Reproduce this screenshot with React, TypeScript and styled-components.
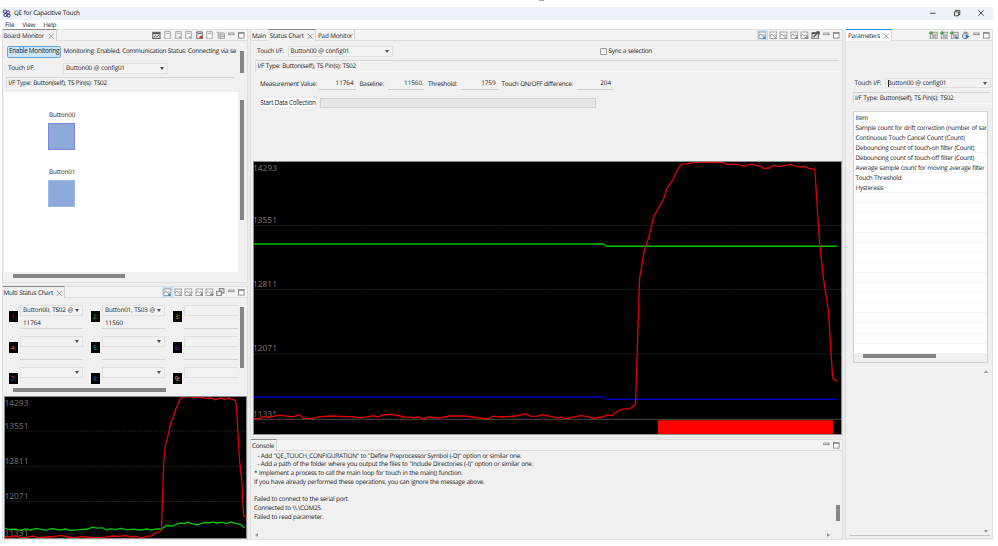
import React from "react";
import styled, { createGlobalStyle, css } from "styled-components";

const Global = createGlobalStyle`
  * { box-sizing: border-box; }
  html, body { margin: 0; background: #fff; }
  body {
    font-family: "Open Sans", "Noto Sans", sans-serif;
    font-size: 6.35px;
    line-height: 8.67px;
    letter-spacing: -0.24px;
    word-spacing: 0.3px;
    color: #1c1c1c;
    text-rendering: geometricPrecision;
    overflow: hidden;
  }
`;

const Page = styled.div`
  width: 998px;
  height: 546px;
  padding: 7px 5px 0 2px;
  background: #fff;
`;
const Win = styled.div`
  display: flex;
  flex-direction: column;
  width: 991px;
  height: 533px;
`;
const Remnant = styled.i`
  position: absolute;
  left: 539px;
  top: 0;
  width: 5px;
  height: 1px;
  background: #a8a8a8;
`;
const TitleBar = styled.header`
  display: flex;
  align-items: center;
  height: 12.5px;
  flex: none;
  background: #edf2f8;
  color: #111;
  gap: 3px;
`;
const TitleText = styled.span`
  flex: 1;
  letter-spacing: -0.24px;
`;
const WinControls = styled.div`
  display: flex;
  gap: 16px;
  padding-right: 8px;
`;
const MenuBar = styled.nav`
  display: flex;
  gap: 8px;
  padding: 0 3px;
  height: 9.5px;
  line-height: 9.5px;
  flex: none;
  background: #fff;
  letter-spacing: -0.2px;
`;
const Body = styled.main`
  display: flex;
  flex: 1;
  min-height: 0;
  gap: 2px;
  background: #ececec;
`;
const Column = styled.section<{ $w: number }>`
  display: flex;
  flex-direction: column;
  width: ${(p) => p.$w}px;
  flex: none;
  min-height: 0;
`;
const Pane = styled.section<{ $h: number; $mt?: number }>`
  display: flex;
  flex-direction: column;
  height: ${(p) => p.$h}px;
  margin-top: ${(p) => p.$mt ?? 0}px;
  flex: none;
  background: #f0f0f0;
  border: 1px solid #dedede;
  border-bottom-color: #e2e2e2;
`;
const TabBar = styled.div`
  display: flex;
  height: 11px;
  flex: none;
  border-bottom: 1px solid #dcdcdc;
  background: #f3f3f3;
`;
const Tab = styled.div<{ $w: number; $active?: "gray" | "blue"; $line?: boolean; $pl?: number }>`
  display: flex;
  justify-content: space-between;
  align-items: center;
  width: ${(p) => p.$w}px;
  height: 11px;
  padding: 1px 2px 0 ${(p) => p.$pl ?? 1}px;
  white-space: nowrap;
  letter-spacing: -0.23px;
  ${(p) =>
    p.$active &&
    css`
      margin-top: -1px;
      height: 12px;
      background: ${p.$active === "blue" ? "#fcfcfc" : "#f0f0f0"};
      border-top: 1px solid ${p.$active === "blue" ? "#2f8fe0" : "#8a8a8a"};
      border-right: 1px solid #d4d4d4;
    `}
  ${(p) => p.$line && "border-right: 1px solid #d4d4d4;"}
`;
const Tools = styled.div`
  display: flex;
  margin-left: auto;
  height: 11px;
`;
const Tool = styled.span<{ $on?: boolean }>`
  display: grid;
  place-items: center;
  width: 10.65px;
  height: 10px;
  background: ${(p) => (p.$on ? "#c6e0f8" : "transparent")};
`;
const Row = styled.div<{ $h: number; $pl?: number; $mt?: number }>`
  display: flex;
  align-items: center;
  height: ${(p) => p.$h}px;
  margin-top: ${(p) => p.$mt ?? 0}px;
  padding-left: ${(p) => p.$pl ?? 0}px;
  flex: none;
  white-space: nowrap;
`;
const Label = styled.span<{ $w?: number }>`
  width: ${(p) => (p.$w ? `${p.$w}px` : "auto")};
  flex: none;
  white-space: pre;
`;
const Combo = styled.div<{ $w: number }>`
  display: flex;
  align-items: center;
  justify-content: space-between;
  width: ${(p) => p.$w}px;
  height: 10.5px;
  padding: 0 3px 0 2px;
  flex: none;
  border: 1px solid #e0e0e0;
  background: #f2f2f2;
  white-space: nowrap;
  letter-spacing: -0.18px;
`;
const Caret = styled.i`
  border: 2.1px solid transparent;
  border-top: 3.6px solid #505050;
  border-bottom: 0;
`;
const TextCursor = styled.i`
  width: 1px;
  height: 7px;
  margin-right: -1px;
  background: #333;
`;
const ComboText = styled.span`
  flex: 1;
`;
const Info = styled.div<{ $w: number; $ml: number; $mt: number; $h?: number }>`
  width: ${(p) => p.$w}px;
  height: ${(p) => p.$h ?? 12}px;
  margin: ${(p) => p.$mt}px 0 0 ${(p) => p.$ml}px;
  padding: 1px 0 0 1.5px;
  flex: none;
  border-top: 1px solid #d5d5d5;
  border-left: 1px solid #d9d9d9;
  border-bottom: 1px solid #f8f8f8;
  white-space: nowrap;
`;
const EnableButton = styled.button`
  width: 54px;
  height: 12px;
  padding: 0;
  margin-right: 2.5px;
  flex: none;
  border: 1px solid #62a4d8;
  border-radius: 1.5px;
  background: #cce4f7;
  color: #222;
  font: inherit;
  letter-spacing: inherit;
  white-space: nowrap;
`;
const StartButton = styled.button`
  width: 58px;
  height: 11px;
  padding: 0;
  flex: none;
  border: 1px solid #ececec;
  border-radius: 1px;
  background: #fdfdfd;
  color: #222;
  font: inherit;
  letter-spacing: inherit;
  white-space: nowrap;
`;
const Progress = styled.div`
  width: 276px;
  height: 10px;
  margin-left: 3px;
  border: 1px solid #d0d0d0;
  background: #e6e6e6;
`;
const Value = styled.span<{ $ml: number }>`
  width: 36.5px;
  height: 11px;
  margin: 0 4px 0 ${(p) => p.$ml}px;
  padding-right: 2px;
  text-align: right;
  letter-spacing: -0.05px;
  border-bottom: 1px solid #cdcdcd;
  background: #f2f2f2;
`;
const Check = styled.i`
  width: 7px;
  height: 7px;
  margin-right: 1.5px;
  border: 1px solid #9a9a9a;
  border-radius: 1px;
  background: #f8f8f8;
`;
const Split = styled.div<{ $h: number }>`
  display: flex;
  height: ${(p) => p.$h}px;
  flex: none;
`;
const Clip = styled.div<{ $w: number }>`
  width: ${(p) => p.$w}px;
  flex: none;
  overflow: hidden;
`;
const VThumb = styled.i<{ $mt: number; $h: number; $ml?: number }>`
  width: 4px;
  height: ${(p) => p.$h}px;
  margin: ${(p) => p.$mt}px 0 0 ${(p) => p.$ml ?? 2}px;
  background: #858585;
`;
const HThumb = styled.i<{ $w: number; $ml: number; $mt: number }>`
  display: block;
  width: ${(p) => p.$w}px;
  height: 4px;
  margin: ${(p) => p.$mt}px 0 0 ${(p) => p.$ml}px;
  flex: none;
  background: #858585;
`;
const Canvas = styled.div`
  width: 234px;
  height: 180px;
  margin-left: 1px;
  padding: 19.4px 0 0 45px;
  flex: none;
  background: #fff;
  letter-spacing: -0.16px;
`;
const PadItem = styled.div`
  height: 57px;
`;
const Pad = styled.div<{ $sel?: boolean }>`
  width: 27px;
  height: 27px;
  margin: 3.3px 0 0 -1px;
  background: #8eaadb;
  border: 1px solid ${(p) => (p.$sel ? "#7c86ec" : "#9db6e2")};
`;
const SlotGrid = styled.div`
  display: grid;
  grid-template-columns: repeat(3, 82px);
  grid-auto-rows: 31px;
  padding: 7px 0 0 6px;
  height: 89px;
  overflow: hidden;
`;
const Slot = styled.div`
  display: flex;
  gap: 2px;
`;
const Num = styled.span<{ $c: string }>`
  width: 9px;
  height: 11px;
  margin-top: 6px;
  background: #000;
  color: ${(p) => p.$c};
  font-size: 6.4px;
  line-height: 11px;
  text-align: center;
`;
const Reading = styled.div`
  width: 63px;
  height: 13px;
  padding: 3.5px 0 0 3px;
  border-bottom: 1px solid #d6d6d6;
  letter-spacing: -0.05px;
`;
const Plot = styled.svg<{ $ml: number; $mt: number }>`
  display: block;
  margin: ${(p) => p.$mt}px 0 0 ${(p) => p.$ml}px;
  flex: none;
  background: #000;
  outline: 1px solid #8c8c8c;
  outline-offset: -1px;
  font-family: "Noto Sans", sans-serif;
  font-size: 8.4px;
  letter-spacing: 0;
`;
const Log = styled.pre`
  width: 580px;
  height: 86px;
  margin: 0;
  padding: 0.8px 0 0 3px;
  font: inherit;
  letter-spacing: -0.26px;
`;
const ArrowRow = styled.div<{ $w: number }>`
  display: flex;
  justify-content: space-between;
  width: ${(p) => p.$w}px;
  padding-left: 4px;
`;
const Arrow = styled.i<{ $d: "l" | "r" | "u" | "d" }>`
  width: 0;
  height: 0;
  border: 2px solid transparent;
  ${(p) => p.$d === "l" && "border-right: 3px solid #9a9a9a; border-left: 0;"}
  ${(p) => p.$d === "r" && "border-left: 3px solid #9a9a9a; border-right: 0;"}
  ${(p) => p.$d === "u" && "border-bottom: 3px solid #9a9a9a; border-top: 0;"}
  ${(p) => p.$d === "d" && "border-top: 3px solid #9a9a9a; border-bottom: 0;"}
`;
const Table = styled.div`
  width: 135px;
  height: 252px;
  margin: 7px 0 0 6.5px;
  flex: none;
  border: 1px solid #d2d2d2;
  background: #f0f0f0;
`;
const Rows = styled.div`
  height: 241px;
  padding-top: 1px;
  overflow: hidden;
  background: #fff;
`;
const ItemRow = styled.div`
  height: 10.05px;
  padding-left: 2px;
  line-height: 9.5px;
  letter-spacing: -0.27px;
  border-bottom: 1px solid #f5f5f5;
  white-space: nowrap;
`;
const Detail = styled.div`
  display: flex;
  flex-direction: column;
  justify-content: space-between;
  align-items: flex-end;
  width: 140px;
  height: 169px;
  margin: 4.5px 0 0 4px;
  padding: 2px 2.5px 2px 0;
  border-top: 1px solid #f5f5f5;
  border-bottom: 1px solid #c4c4c4;
`;

type IconKind =
  | "chart" | "chartX" | "chartPlus" | "film" | "page" | "pageDot" | "pageRed"
  | "tree" | "cascade" | "min" | "max" | "pin" | "add" | "addBlue" | "gear";

const Icon = ({ kind }: { kind: IconKind }) => {
  const g = "#8b8b8b";
  const frame = <rect x=".9" y=".9" width="6.4" height="6" fill="#f7f7f7" stroke={g} strokeWidth=".7" />;
  const wave = <path d="M1 4.6 2.6 3 4 4.4 5.3 3.6 7 4.4" fill="none" stroke="#777" strokeWidth=".7" />;
  const page = <path d="M1.6.6H6.8V7.3H1.6ZM2.8 2.3H5.8" fill="#f6f6f6" stroke={g} strokeWidth=".7" />;
  const sheet = (
    <>
      <path d="M2 1.2H7.6V7.4H1.2V4" fill="#e4e4e4" stroke="#777" strokeWidth=".7" />
      <path d="M3 3.8H6.8M3 5.6H6.8" stroke="#555" strokeWidth=".8" strokeDasharray="1.4 .5" />
      <path d="M0 1.9H3.6M1.8 .1V3.7" stroke="#26a02c" strokeWidth="1.1" />
    </>
  );
  const parts: Record<IconKind, React.ReactNode> = {
    chart: <>{frame}{wave}<path d="M4.6 4.6 7.6 6.2 5.5 7.7Z" fill="#2d7dd2" /></>,
    chartX: <>{frame}{wave}<path d="M4.6 5 7 7M7 5 4.6 7" stroke="#888" strokeWidth=".6" /></>,
    chartPlus: <>{frame}{wave}<path d="M4.8 6.1H8M6.4 4.5V7.7" stroke="#777" strokeWidth=".8" /></>,
    film: <><rect x=".7" y="1.2" width="6.8" height="5.8" fill="#ddd" stroke="#555" strokeWidth=".9" /><path d="M1 2.3H7.2" stroke="#444" strokeWidth="1.1" /><path d="M2 6 3.3 4.2 4.4 5.4 6.3 4" fill="none" stroke="#444" strokeWidth=".7" /></>,
    page,
    pageDot: <>{page}<circle cx="5.4" cy="5.7" r="1.1" fill="#aaa" /></>,
    pageRed: <><path d="M1.6.8H6.8V7.3H1.6ZM2.2 2.3H6.4" fill="#eee" stroke="#555" strokeWidth=".8" /><circle cx="5.6" cy="5.8" r="1.4" fill="#d22" /></>,
    tree: <path d="M.5 1.2H3.2M2 1.2V6.8H3.5M2 3.7H3.5M3.7 1.8H7.8V7.2H3.7ZM3.7 3.6H7.8M3.7 5.4H7.8" fill="none" stroke="#888" strokeWidth=".7" />,
    cascade: <><rect x="3" y=".7" width="4.4" height="4" fill="#ddd" stroke="#666" strokeWidth=".8" /><rect x=".7" y="3" width="4.2" height="4.2" fill="#eee" stroke="#666" strokeWidth=".8" /></>,
    min: <rect x="1.6" y="1.9" width="5" height="1.6" fill="#fff" stroke="#777" strokeWidth=".7" />,
    max: <><rect x="1.4" y="1.6" width="5.2" height="5" fill="#fafafa" stroke="#777" strokeWidth=".7" /><path d="M1.2 2H6.8" stroke="#777" strokeWidth="1" /></>,
    pin: <><rect x=".9" y="1.5" width="6" height="5.8" fill="#ddd" stroke="#555" strokeWidth=".8" /><path d="M1 2.3H5M2.3 5.8 7.4 .8M5 .8H7.6V3.2" fill="none" stroke="#444" strokeWidth="1" /></>,
    add: sheet,
    addBlue: <>{sheet}<path d="M4.8 5 7.9 6.3 5.6 8Z" fill="#2d7dd2" /></>,
    gear: <><circle cx="3.7" cy="4.7" r="2.4" fill="#d5dbe2" stroke="#66788c" strokeWidth=".8" /><path d="M2.3 1.2H5.6L7 3.4" fill="none" stroke="#777" strokeWidth=".8" /><path d="M4.4 3.3 8 4.8 4.8 7.6Z" fill="#3574b5" /></>,
  };
  return <svg width="8.6" height="8.6" viewBox="0 0 8 8">{parts[kind]}</svg>;
};

const Close = () => (
  <svg width="6.5" height="6.5" viewBox="0 0 6 6"><path d="M.6.6 5.4 5.4M5.4.6.6 5.4" stroke="#888" strokeWidth=".7" /></svg>
);

const Toolbar = ({ kinds, on }: { kinds: IconKind[]; on?: number }) => (
  <Tools>
    {kinds.map((k, i) => <Tool key={i} $on={i === on}><Icon kind={k} /></Tool>)}
  </Tools>
);

const Logo = () => (
  <svg width="9" height="9" viewBox="0 0 9 9">
    <g fill="none" stroke="#33307c" strokeWidth="1">
      <circle cx="3" cy="2.6" r="1.7" /><circle cx="6.2" cy="3.4" r="1.5" /><circle cx="3.4" cy="6" r="1.6" /><circle cx="6.6" cy="6.6" r="1.5" />
    </g>
  </svg>
);

const axis = [14293, 13551, 12811, 12071, 11331];

const mainRed =
  "253,418.6 259,418.6 263,416.6 268,417.4 281,414.8 286,416.2 294,416.6 299.5,414.8 303.5,418.4 313,418.4 319,416.8 330,416 354,416.8 360,417.6 368,416.8 373,415.6 377.5,417 383,415 390,414.4 396,415 404,417 411,417.2 414,418 418,416.8 423.5,419 428,416.8 439,418 450,416 465,416 480,418 488,419 493,416.2 501,417 516,416 525,413.8 531,416.4 537,416.2 543,414.6 551,416.6 557,417.6 562,417.2 566,419 571,417.4 581,415.6 588,416.6 593.5,418.5 602,417 607.5,414.8 612,415.8 617,411.8 621.5,409.4 630,408.6 635.5,404.6 639.6,278 644.3,251 649,236.5 653.3,218 658,208.5 663,200.5 667.5,187.5 672.5,180.5 676,172.5 681.3,164.2 687,163.8 699,161.8 704,162.4 723,162.6 727,164.4 737,164.4 745,166.4 750.5,164.2 760,166 764,168.6 769,168 773.5,165.2 778.5,166.6 791,164.4 797,166.6 800.5,167.2 805,166.4 809,168.4 814.8,169.4 819.5,242 823.5,279 828.3,310 832.5,375.5 833.2,378.6 837,381.6";

const multiRed =
  "4,537.5 10,538 15,537 20,538.5 26,538.2 32,537 38,538.6 45,538 52,538 60,536.3 66,537.5 73,539 80,537.6 88,538 95,539 105,538.2 113,537 119,537.4 124,536.4 130,538 136,537.4 141,539 147,537.2 151,537 155,533.5 159,533 161,530 163.2,463 165,446 168,434.5 170.5,423 173,418 175.3,410 177.5,405.5 179.3,400.5 181,398.6 188,397.6 194,398 200,398.2 206,399.6 210,398.6 215,400.8 220,399 224,400.4 228,399 235,401.6 236,408 239,461 241.3,482 243,516 245,518.5";

const multiGreen =
  "4,529 9,530.5 15,530.2 20,531.4 25,530 30,531 36,529.4 45,531.4 51,529.6 60,531 65,530 70,531.3 80,530.6 87,530 92,528.2 96,529.2 102,528.8 106,531 110,529.6 115,530.6 120,529.4 127,530.8 133,530.2 140,531 146,530 151,531 156,529.8 161,530 166,526.5 172,527 176,525 181,524 184,524.6 187,523 190,524.4 197,526 203,523.6 208,524 213,523 216,524.2 221,523.2 226,524.6 230,523 235,524.4 240,525.4 244,529";

const slots: [string, string, string][] = [
  ["#e01414", "Button00, TS02 @", "11764"], ["#00c800", "Button01, TS03 @", "11560"], ["#c8c000", "", ""],
  ["#f07818", "", ""], ["#00c8c8", "", ""], ["#7a20f0", "", ""],
  ["#d070a8", "", ""], ["#1880f0", "", ""], ["#e0e0e0", "", ""],
];

const items = [
  "Item", "Sample count for drift correction (number of sar", "Continuous Touch Cancel Count (Count)",
  "Debouncing count of touch-on filter (Count)", "Debouncing count of touch-off filter (Count)",
  "Average sample count for moving average filter", "Touch Threshold", "Hysteresis",
  ...Array<string>(15).fill(""),
];

const log = `  - Add "QE_TOUCH_CONFIGURATION" to "Define Preprocessor Symbol (-D)" option or similar one.
  - Add a path of the folder where you output the files to "Include Directories (-I)" option or similar one.
* Implement a process to call the main loop for touch in the main() function.
If you have already performed these operations, you can ignore the message above.

Failed to connect to the serial port.
Connected to \\\\.\\COM25.
Failed to read parameter.`;

const MainPlot = () => (
  <Plot $ml={2} $mt={2} width="589" height="274" viewBox="253 161 589 274">
    {[225.5, 289.5, 354].map((y) => (
      <path key={y} d={`M253 ${y}H842`} stroke="#303030" strokeWidth=".8" strokeDasharray="1.5 .8" />
    ))}
    <path d="M253 419.3H842" stroke="#4a4a4a" strokeWidth="1" />
    {axis.map((v, i) => (
      <text key={v} x="253" y={[171.3, 223, 287.2, 351.4, 417.3][i]} fill="#707070">{v}</text>
    ))}
    <rect x="658" y="420.3" width="175" height="14.7" fill="#f00" />
    <path d="M253 244H603L607.5 246.3H837" fill="none" stroke="#00c400" strokeWidth="1.4" />
    <path d="M253 397H603L607.5 399.3H837" fill="none" stroke="#0000c0" strokeWidth="1.4" />
    <polyline points={mainRed} fill="none" stroke="#e60000" strokeWidth="1.3" />
  </Plot>
);

const MultiPlot = () => (
  <Plot $ml={0.5} $mt={4.5} width="243" height="142.5" viewBox="3.5 397 243 142.5">
    {[432, 467.3, 502.5].map((y) => (
      <path key={y} d={`M3 ${y}H247`} stroke="#303030" strokeWidth=".8" strokeDasharray="1.5 .8" />
    ))}
    {axis.map((v, i) => (
      <text key={v} x="4" y={[406.8, 429.7, 464.7, 499.7, 537][i]} fill="#707070">{v}</text>
    ))}
    <polyline points={multiGreen} fill="none" stroke="#00c800" strokeWidth="1.3" />
    <polyline points={multiRed} fill="none" stroke="#e60000" strokeWidth="1.3" />
  </Plot>
);

export default function App() {
  return (
    <Page>
      <Global />
      <Remnant />
      <Win>
        <TitleBar>
          <Logo />
          <TitleText>QE for Capacitive Touch</TitleText>
          <WinControls>
            <svg width="8" height="8" viewBox="0 0 8 8"><path d="M1 4.2H6.5" stroke="#222" strokeWidth=".8" /></svg>
            <svg width="8" height="8" viewBox="0 0 8 8"><path d="M1.5 2.8H5.5V6.8H1.5ZM2.7 2.6V1.3H6.8V5.5H5.7" fill="none" stroke="#222" strokeWidth=".8" /></svg>
            <svg width="8" height="8" viewBox="0 0 8 8"><path d="M1.3 1.3 6.7 6.7M6.7 1.3 1.3 6.7" stroke="#222" strokeWidth=".8" /></svg>
          </WinControls>
        </TitleBar>
        <MenuBar><span>File</span><span>View</span><span>Help</span></MenuBar>
        <Body>
          <Column $w={246}>
            <Pane $h={254}>
              <TabBar>
                <Tab $w={54} $pl={0.5} $active="gray">Board Monitor <Close /></Tab>
                <Toolbar kinds={["film", "page", "pageDot", "pageDot", "pageRed", "page", "tree", "min", "max"]} />
              </TabBar>
              <Split $h={51}>
                <Clip $w={235}>
                  <Row $h={12} $mt={4.5} $pl={4}>
                    <EnableButton>Enable Monitoring</EnableButton>
                    Monitoring: Enabled, Communication Status: Connecting via se
                  </Row>
                  <Row $h={12} $mt={5} $pl={5}>
                    <Label $w={55}>Touch I/F:</Label>
                    <Combo $w={105}>Button00 @ config01<Caret /></Combo>
                  </Row>
                  <Info $w={228} $ml={3} $mt={2.5}>I/F Type: Button(self), TS Pin(s): TS02</Info>
                </Clip>
                <VThumb $mt={10} $h={22} />
              </Split>
              <Split $h={180}>
                <Canvas>
                  <PadItem>Button00<Pad $sel /></PadItem>
                  <PadItem>Button01<Pad /></PadItem>
                </Canvas>
                <VThumb $mt={8} $h={120} $ml={2} />
              </Split>
              <HThumb $w={112} $ml={10} $mt={2} />
            </Pane>
            <Pane $h={254} $mt={3}>
              <TabBar>
                <Tab $w={62} $pl={0.5} $active="gray">Multi Status Chart <Close /></Tab>
                <Toolbar on={0} kinds={["chart", "chartX", "chartX", "chartPlus", "chartPlus", "cascade", "min", "max"]} />
              </TabBar>
              <Split $h={89}>
                <Clip $w={235}>
                  <SlotGrid>
                    {slots.map(([c, name, value], i) => (
                      <Slot key={i}>
                        <Num $c={c}>{i + 1}:</Num>
                        <div>
                          <Combo $w={63}>{name || <span />}<Caret /></Combo>
                          <Reading>{value}</Reading>
                        </div>
                      </Slot>
                    ))}
                  </SlotGrid>
                </Clip>
                <VThumb $mt={9} $h={61} />
              </Split>
              <HThumb $w={153} $ml={10} $mt={0.5} />
              <MultiPlot />
            </Pane>
          </Column>
          <Column $w={593}>
            <Pane $h={409}>
              <TabBar>
                <Tab $w={17}>Main</Tab>
                <Tab $w={48} $pl={1.8} $active="gray">Status Chart <Close /></Tab>
                <Tab $w={38.5} $pl={2} $line>Pad Monitor</Tab>
                <Toolbar on={0} kinds={["chart", "chartX", "chartX", "chartPlus", "chartPlus", "pin", "min", "max"]} />
              </TabBar>
              <Row $h={12} $mt={4.5} $pl={6}>
                <Label $w={30.5}>Touch I/F:</Label>
                <Combo $w={105}>Button00 @ config01<Caret /></Combo>
                <Label $w={207.5} />
                <Check />Sync a selection
              </Row>
              <Info $w={584} $ml={4} $mt={2.5}>I/F Type: Button(self), TS Pin(s): TS02</Info>
              <Row $h={12} $mt={6.3} $pl={9}>
                <Label $w={56}>Measurement Value:</Label><Value $ml={3}>11764</Value>
                <Label $w={24}>Baseline:</Label><Value $ml={4}>11560</Value>
                <Label $w={29}>Threshold:</Label><Value $ml={4}>1759</Value>
                <Label $w={71}>Touch ON/OFF difference:</Label><Value $ml={4}>204</Value>
              </Row>
              <Row $h={12} $mt={6.7} $pl={8}>
                <StartButton>Start Data Collection</StartButton>
                <Progress />
              </Row>
              <Row $h={50} />
              <MainPlot />
            </Pane>
            <Pane $h={101} $mt={1}>
              <TabBar>
                <Tab $w={26} $active="gray">Console</Tab>
                <Toolbar kinds={["min", "max"]} />
              </TabBar>
              <Split $h={81.5}>
                <Log>{log}</Log>
                <VThumb $mt={54} $h={16} $ml={4.5} />
              </Split>
              <ArrowRow $w={579}><Arrow $d="l" /><Arrow $d="r" /></ArrowRow>
            </Pane>
          </Column>
          <Column $w={148}>
            <Pane $h={510}>
              <TabBar>
                <Tab $w={46} $pl={2} $active="blue">Parameters <Close /></Tab>
                <Toolbar kinds={["add", "add", "addBlue", "gear", "min", "max"]} />
              </TabBar>
              <Row $h={12} $mt={36} $pl={8.5}>
                <Label $w={30}>Touch I/F:</Label>
                <Combo $w={106}><TextCursor /><ComboText>Button00 @ config01</ComboText><Caret /></Combo>
              </Row>
              <Info $w={137} $ml={6.5} $mt={2.5}>I/F Type: Button(self), TS Pin(s): TS02</Info>
              <Table>
                <Rows>{items.map((t, i) => <ItemRow key={i}>{t}</ItemRow>)}</Rows>
                <HThumb $w={73} $ml={9} $mt={1.5} />
              </Table>
              <Detail><Arrow $d="u" /><Arrow $d="d" /></Detail>
            </Pane>
          </Column>
        </Body>
      </Win>
    </Page>
  );
}
